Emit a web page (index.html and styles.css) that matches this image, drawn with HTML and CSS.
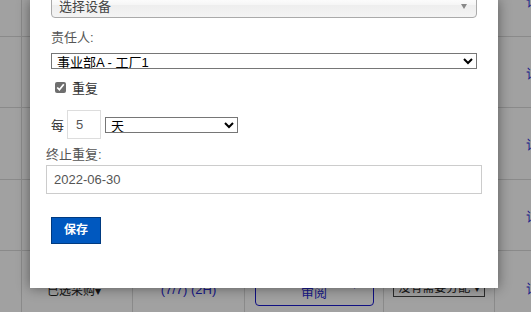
FILE: index.html
```html
<!DOCTYPE html>
<html lang="zh-CN">
<head>
    <meta charset="UTF-8">
    <title>重复任务</title>
    <link rel="stylesheet" href="styles.css">
</head>
<body>
    <div class="grid">
        <div class="row r0">
            <div class="cell"></div><div class="cell"></div><div class="cell"></div>
            <div class="cell"></div><div class="cell"></div><div class="cell last"><a>详</a></div>
        </div>
        <div class="row r1">
            <div class="cell"></div><div class="cell"></div><div class="cell"></div>
            <div class="cell"></div><div class="cell"></div><div class="cell last"><a>详</a></div>
        </div>
        <div class="row r2">
            <div class="cell"></div><div class="cell"></div><div class="cell"></div>
            <div class="cell"></div><div class="cell"></div><div class="cell last"><a>详</a></div>
        </div>
        <div class="row r3">
            <div class="cell"></div><div class="cell"></div><div class="cell"></div>
            <div class="cell"></div><div class="cell"></div><div class="cell last"><a>详</a></div>
        </div>
        <div class="row r4">
            <div class="cell"></div>
            <div class="cell"><span class="pick">已选采购▾</span></div>
            <div class="cell"><a class="count">(7/7) (2H)</a></div>
            <div class="cell"><div class="review">审阅<span class="caret">▾</span></div></div>
            <div class="cell"><div class="assign">没有需要分配 ▾</div></div>
            <div class="cell last"><a>详</a></div>
        </div>
    </div>

    <div class="overlay"></div>

    <div class="modal">
        <div class="group">
            <div class="chosen">
                <span>选择设备</span>
                <span class="chosen-arrow"></span>
            </div>

            <div class="label owner-label">责任人:</div>
            <select class="sel owner">
                <option>事业部A - 工厂1</option>
            </select>

            <label class="check">
                <input type="checkbox" checked>
                <span>重复</span>
            </label>

            <div class="every">
                <span>每</span>
                <input type="text" class="num" value="5">
                <select class="sel unit">
                    <option>天</option>
                </select>
            </div>
        </div>

        <div class="label end-label">终止重复:</div>
        <input type="text" class="date" value="2022-06-30">

        <div class="group">
            <button class="save">保存</button>
        </div>
    </div>
</body>
</html>
```

FILE: styles.css
```css
html, body {
    margin: 0;
    height: 100%;
    overflow: hidden;
}
body {
    position: relative;
    background: #fff;
    font-family: "Liberation Sans", Arial, "Noto Sans CJK SC", sans-serif;
    font-size: 13px;
    color: #333;
}

/* table behind the dialog */
.grid {
    margin-top: -35px;
}
.row {
    display: grid;
    grid-template-columns: 22px 111px 112px 139px 111px 1fr;
    box-sizing: border-box;
    border-bottom: 1px solid #dbdbdb;
}
.r0 { height: 72px; }
.r1 { height: 71px; }
.r2 { height: 72px; }
.r3 { height: 71px; }
.r4 { height: 72px; border-bottom: none; }
.cell {
    border-right: 1px solid #dbdbdb;
    display: flex;
    align-items: center;
    justify-content: center;
}
.cell.last {
    border-right: none;
    justify-content: flex-start;
    padding-left: 31px;
}
a {
    color: #2a2ad8;
    font-size: 13px;
}
.pick {
    font-size: 12px;
    color: #222;
    margin: 4px 6px 0 0;
}
.count {
    margin-top: 4px;
}
.review {
    width: 119px;
    height: 30px;
    margin-top: 8px;
    box-sizing: border-box;
    border: 1px solid #1a1ad0;
    border-radius: 4px;
    display: flex;
    align-items: center;
    justify-content: center;
    color: #2a2ad8;
    position: relative;
}
.review .caret {
    position: absolute;
    right: 16px;
    top: 3px;
    font-size: 10px;
}
.assign {
    width: 90px;
    height: 16px;
    margin-top: 2px;
    border: 1px solid #444;
    font-size: 12px;
    line-height: 16px;
    color: #222;
    text-align: center;
}

.overlay {
    position: absolute;
    inset: 0;
    background: rgba(0, 0, 0, 0.37);
}

/* dialog */
.modal {
    position: absolute;
    left: 30px;
    top: 0;
    width: 468px;
    height: 288px;
    box-sizing: border-box;
    padding: 0 16px;
    background: #fff;
    box-shadow: 0 0 12px rgba(0, 0, 0, 0.45);
}
.group {
    margin: 0 5px;
}
.chosen {
    margin-top: -9px;
    height: 27px;
    box-sizing: border-box;
    border: 1px solid #aaa;
    border-radius: 4px;
    background: linear-gradient(#fff 20%, #f6f6f6 50%, #eee 52%, #f4f4f4);
    padding: 6px 0 0 7px;
    line-height: 17px;
    color: #444;
    display: flex;
    justify-content: space-between;
}
.chosen-arrow {
    width: 0;
    height: 0;
    margin: 6px 9px 0 0;
    border-left: 3px solid transparent;
    border-right: 3px solid transparent;
    border-top: 5px solid #888;
}
.label {
    color: #555;
    line-height: 16px;
}
.owner-label {
    margin-top: 12px;
}
.sel {
    display: block;
    height: 16px;
    padding: 0 1px;
    box-sizing: border-box;
    border: 1px solid #767676;
    border-radius: 0;
    background: #fff;
    font-family: inherit;
    font-size: 13px;
    line-height: 14px;
    color: #000;
}
.owner {
    width: 100%;
    margin-top: 7px;
}
.check {
    display: flex;
    align-items: center;
    margin-top: 10px;
    height: 16px;
    color: #333;
}
.check input {
    width: 11px;
    height: 11px;
    margin: 0 6px 0 4px;
    accent-color: #6e6e6e;
}
.every {
    display: flex;
    align-items: center;
    margin-top: 15px;
    height: 29px;
}
.num {
    width: 34px;
    height: 29px;
    margin: 0 4px 0 3px;
    box-sizing: border-box;
    border: 1px solid #ddd;
    padding: 0 8px;
    font-family: inherit;
    font-size: 13px;
    color: #555;
}
.unit {
    width: 133px;
}
.end-label {
    margin-top: 8px;
}
.date {
    display: block;
    width: 100%;
    height: 29px;
    margin-top: 2px;
    box-sizing: border-box;
    border: 1px solid #ccc;
    padding: 0 7px;
    font-family: inherit;
    font-size: 13px;
    color: #555;
}
.save {
    margin-top: 23px;
    width: 50px;
    height: 27px;
    border: 1px solid #003a80;
    background: #0058bf;
    color: #fff;
    font-family: inherit;
    font-size: 12px;
    font-weight: bold;
    line-height: 16px;
    padding: 0 0 1px;
}
```
